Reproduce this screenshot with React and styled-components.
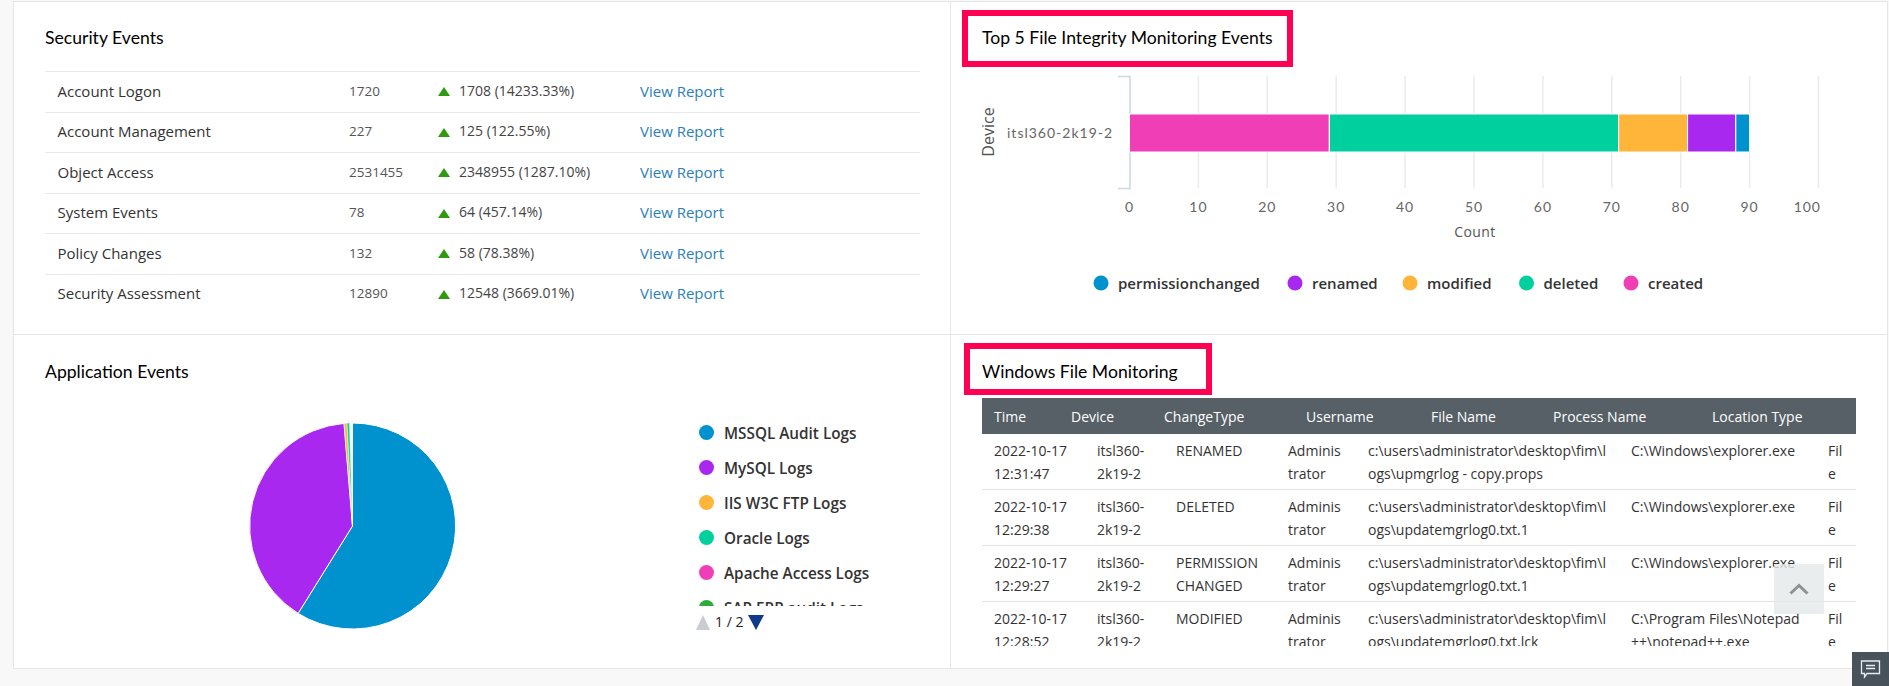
import React from "react";
import styled, { createGlobalStyle } from "styled-components";

const GlobalStyle = createGlobalStyle`
  html, body {
    margin: 0;
    padding: 0;
    background: #f8f8f8;
    overflow: hidden;
  }
  body {
    font-family: "Open Sans", "Liberation Sans", sans-serif;
    color: #333;
  }
`;

const Page = styled.div`
  position: relative;
  width: 1889px;
  height: 686px;
  padding-top: 1px;
  box-sizing: border-box;
  overflow: hidden;
`;

const Board = styled.div`
  margin-left: 13px;
  width: 1875px;
  box-sizing: border-box;
  display: grid;
  grid-template-columns: 937px 936px;
  grid-template-rows: 333px 333px;
  background: #fff;
  border: 1px solid #e6e6e6;
`;

const Panel = styled.section`
  position: relative;
  min-width: 0;
  overflow: hidden;
  box-sizing: border-box;
  padding: ${(p) => (p.$lower ? "26px" : "25px")} ${(p) => (p.$side ? "31px" : "30px")} 0 31px;
  border-right: ${(p) => (p.$side ? "none" : "1px solid #e6e6e6")};
  border-bottom: ${(p) => (p.$lower ? "none" : "1px solid #e6e6e6")};
`;

const Title = styled.h2`
  margin: 0 0 ${(p) => p.$gap || 22}px;
  font-family: Lato, "Open Sans", sans-serif;
  font-size: 17.6px;
  line-height: 22px;
  font-weight: 400;
  color: #000;
`;

const Highlight = styled.div`
  position: absolute;
  left: ${(p) => p.$left}px;
  top: ${(p) => p.$top}px;
  width: ${(p) => p.$width}px;
  height: ${(p) => p.$height}px;
  box-sizing: border-box;
  border: 6px solid #ff0052;
  pointer-events: none;
`;

// security events
const EventRow = styled.div`
  display: grid;
  grid-template-columns: 291.5px 89px 202px 1fr;
  align-items: center;
  height: 40.5px;
  box-sizing: border-box;
  padding-left: 12.5px;
  border-top: 1px solid #e9e9e9;
  font-size: 14px;
`;

const EventName = styled.span`
  font-size: 15px;
  color: #333;
  margin-top: -2px;
`;

const EventCount = styled.span`
  font-size: 13.5px;
  color: #555;
  margin-top: -2px;
`;

const EventDelta = styled.span`
  display: flex;
  align-items: center;
  gap: 9px;
  color: #444;
  margin-top: -3px;
`;

const UpArrow = styled.i`
  width: 0;
  height: 0;
  border-left: 6.5px solid transparent;
  border-right: 6.5px solid transparent;
  border-bottom: 9px solid #2f9a0f;
  margin-top: 3px;
`;

const ReportLink = styled.a`
  font-size: 15px;
  color: #2a80b9;
  text-decoration: none;
  margin-top: -2px;
`;

// bar chart
const ChartSvg = styled.svg`
  display: block;
  margin-left: -31px;
`;

const Tick = styled.text`
  font-family: Lato, "Open Sans", sans-serif;
  font-size: 14px;
  letter-spacing: 1px;
  fill: #666;
`;

const AxisName = styled.text`
  font-family: "Open Sans", sans-serif;
  font-size: ${(p) => p.$size || 14}px;
  fill: #555;
`;

const LegendText = styled.text`
  font-family: "Open Sans", sans-serif;
  font-size: 15px;
  font-weight: 600;
  fill: #333;
`;

// application events
const PieRow = styled.div`
  display: flex;
`;

const PieSvg = styled.svg`
  display: block;
  flex: none;
`;

const PieLegend = styled.div`
  padding-top: 10px;
  margin-left: -1px;
`;

const LegendClip = styled.ul`
  list-style: none;
  margin: 0;
  padding: 0;
  height: 191px;
  overflow: hidden;
`;

const LegendItem = styled.li`
  display: flex;
  align-items: center;
  gap: 10px;
  height: 35px;
  font-size: 15.3px;
  font-weight: 600;
  color: #333;
`;

const Dot = styled.i`
  flex: none;
  width: 15px;
  height: 15px;
  border-radius: 50%;
  background: ${(p) => p.$color};
`;

const Pager = styled.div`
  display: flex;
  align-items: center;
  gap: 5px;
  margin-top: 7px;
  margin-left: -3px;
  font-size: 14px;
  line-height: 18px;
  color: #222;
`;

const PagerUp = styled.i`
  width: 0;
  height: 0;
  border-left: 7.5px solid transparent;
  border-right: 7.5px solid transparent;
  border-bottom: 15px solid #c9ccd0;
`;

const PagerDown = styled.i`
  width: 0;
  height: 0;
  border-left: 8px solid transparent;
  border-right: 8px solid transparent;
  border-top: 15px solid #0f3a8c;
`;

// file monitoring table
const HeadRow = styled.div`
  display: grid;
  grid-template-columns: 77px 93px 142px 125px 122px 159px 1fr;
  align-items: center;
  height: 36px;
  padding-left: 12px;
  background: #566066;
  color: #fff;
  font-size: 14px;
`;

const BodyClip = styled.div`
  height: 212px;
  overflow: hidden;
`;

const FileRow = styled.div`
  display: grid;
  grid-template-columns: 103px 79px 112px 80px 263px 197px 1fr;
  height: 56px;
  box-sizing: border-box;
  border-bottom: 1px solid #e2e2e2;
`;

const FileCell = styled.div`
  padding: 5px 12px 0;
  font-size: 14px;
  line-height: 23px;
  color: #333;
  overflow-wrap: anywhere;
  word-break: ${(p) => (p.$hard ? "break-all" : "normal")};
`;

const TopButton = styled.button`
  position: absolute;
  left: 1774px;
  top: 564px;
  width: 50px;
  height: 50px;
  padding: 0;
  border: 0;
  background: rgba(229, 232, 234, 0.8);
  display: flex;
  align-items: center;
  justify-content: center;
`;

const ChatButton = styled.button`
  position: absolute;
  left: 1852px;
  top: 652px;
  width: 37px;
  height: 34px;
  padding: 0;
  border: 0;
  background: #47525b;
  display: flex;
  align-items: center;
  justify-content: center;
`;

const events = [
  { name: "Account Logon", count: "1720", delta: "1708 (14233.33%)" },
  { name: "Account Management", count: "227", delta: "125 (122.55%)" },
  { name: "Object Access", count: "2531455", delta: "2348955 (1287.10%)" },
  { name: "System Events", count: "78", delta: "64 (457.14%)" },
  { name: "Policy Changes", count: "132", delta: "58 (78.38%)" },
  { name: "Security Assessment", count: "12890", delta: "12548 (3669.01%)" },
];

const bars = [
  { from: 0, to: 29, color: "#f03eb6" },
  { from: 29, to: 71, color: "#00cf9e" },
  { from: 71, to: 81, color: "#ffb43a" },
  { from: 81, to: 88, color: "#a928f0" },
  { from: 88, to: 90, color: "#0092ce" },
];

const chartLegend = [
  { label: "permissionchanged", x: 1100, color: "#0092ce" },
  { label: "renamed", x: 1294, color: "#a928f0" },
  { label: "modified", x: 1409, color: "#ffb43a" },
  { label: "deleted", x: 1525.5, color: "#00cf9e" },
  { label: "created", x: 1630, color: "#f03eb6" },
];

const pieLegend = [
  { label: "MSSQL Audit Logs", color: "#0092ce" },
  { label: "MySQL Logs", color: "#a928f0" },
  { label: "IIS W3C FTP Logs", color: "#ffb43a" },
  { label: "Oracle Logs", color: "#00cf9e" },
  { label: "Apache Access Logs", color: "#f03eb6" },
  { label: "SAP ERP audit Logs", color: "#2eab3f" },
];

const heads = ["Time", "Device", "ChangeType", "Username", "File Name", "Process Name", "Location Type"];

const files = [
  ["2022-10-17 12:31:47", "RENAMED", "c:\\users\\administrator\\desktop\\fim\\logs\\upmgrlog - copy.props", "C:\\Windows\\explorer.exe"],
  ["2022-10-17 12:29:38", "DELETED", "c:\\users\\administrator\\desktop\\fim\\logs\\updatemgrlog0.txt.1", "C:\\Windows\\explorer.exe"],
  ["2022-10-17 12:29:27", "PERMISSION CHANGED", "c:\\users\\administrator\\desktop\\fim\\logs\\updatemgrlog0.txt.1", "C:\\Windows\\explorer.exe"],
  ["2022-10-17 12:28:52", "MODIFIED", "c:\\users\\administrator\\desktop\\fim\\logs\\updatemgrlog0.txt.lck", "C:\\Program Files\\Notepad++\\notepad++.exe"],
];

const tickX = (v) => 1128.5 + v * 6.89;

const BarChart = () => (
  <ChartSvg width="937" height="263" viewBox="950 71 937 263">
    {[10, 20, 30, 40, 50, 60, 70, 80, 90, 100].map((v) => (
      <line key={v} x1={tickX(v)} x2={tickX(v)} y1="76" y2="188" stroke="#ebebeb" strokeWidth="1.5" />
    ))}
    <path d="M1117 76.5H1129V188.5H1117" fill="none" stroke="#ccd6eb" strokeWidth="1.5" />
    {bars.map((b) => (
      <rect
        key={b.color}
        x={tickX(b.from)}
        y="114"
        width={(b.to - b.from) * 6.89}
        height="38"
        fill={b.color}
        stroke="#fff"
        strokeWidth="1"
      />
    ))}
    <AxisName $size={16} transform="translate(993 132) rotate(-90)" textAnchor="middle">Device</AxisName>
    <Tick x="1006" y="138">itsl360-2k19-2</Tick>
    {[0, 10, 20, 30, 40, 50, 60, 70, 80, 90].map((v) => (
      <Tick key={v} x={tickX(v)} y="212" textAnchor="middle">{v}</Tick>
    ))}
    <Tick x="1820" y="212" textAnchor="end">100</Tick>
    <AxisName x="1474" y="237" textAnchor="middle" letterSpacing="0.4">Count</AxisName>
    {chartLegend.map((l) => (
      <g key={l.label}>
        <circle cx={l.x} cy="283" r="7.5" fill={l.color} />
        <LegendText x={l.x + 17} y="289">{l.label}</LegendText>
      </g>
    ))}
  </ChartSvg>
);

const Pie = () => (
  <PieSvg width="655" height="260" viewBox="45 405 655 260">
    <g stroke="#fff" strokeWidth="1">
      <path d="M352.5 526V423A103 103 0 1 1 298.1 613.4Z" fill="#0092ce" />
      <path d="M352.5 526L298.1 613.4A103 103 0 0 1 344 423.4Z" fill="#a928f0" />
      <path d="M352.5 526L344 423.4A103 103 0 0 1 347 423.1Z" fill="#ffb43a" strokeWidth="0.5" />
      <path d="M352.5 526L347 423.1A103 103 0 0 1 349.5 423Z" fill="#00cf9e" strokeWidth="0.5" />
    </g>
  </PieSvg>
);

export default function App() {
  return (
    <>
      <GlobalStyle />
      <Page>
        <Board>
          <Panel>
            <Title>Security Events</Title>
            {events.map((e) => (
              <EventRow key={e.name}>
                <EventName>{e.name}</EventName>
                <EventCount>{e.count}</EventCount>
                <EventDelta>
                  <UpArrow />
                  {e.delta}
                </EventDelta>
                <ReportLink href="#">View Report</ReportLink>
              </EventRow>
            ))}
          </Panel>
          <Panel $side>
            <Title>Top 5 File Integrity Monitoring Events</Title>
            <BarChart />
          </Panel>
          <Panel $lower>
            <Title>Application Events</Title>
            <PieRow>
              <Pie />
              <PieLegend>
                <LegendClip>
                  {pieLegend.map((l) => (
                    <LegendItem key={l.label}>
                      <Dot $color={l.color} />
                      {l.label}
                    </LegendItem>
                  ))}
                </LegendClip>
                <Pager>
                  <PagerUp />
                  1 / 2
                  <PagerDown />
                </Pager>
              </PieLegend>
            </PieRow>
          </Panel>
          <Panel $lower $side>
            <Title $gap={15}>Windows File Monitoring</Title>
            <HeadRow>
              {heads.map((h) => (
                <span key={h}>{h}</span>
              ))}
            </HeadRow>
            <BodyClip>
              {files.map((f) => (
                <FileRow key={f[0]}>
                  <FileCell>{f[0]}</FileCell>
                  <FileCell>itsl360-2k19-2</FileCell>
                  <FileCell>{f[1]}</FileCell>
                  <FileCell $hard>Administrator</FileCell>
                  <FileCell $hard>{f[2]}</FileCell>
                  <FileCell $hard>{f[3]}</FileCell>
                  <FileCell $hard>File</FileCell>
                </FileRow>
              ))}
            </BodyClip>
          </Panel>
        </Board>
        <Highlight $left={962} $top={10} $width={331} $height={57} />
        <Highlight $left={964} $top={343} $width={248} $height={52} />
        <TopButton aria-label="Back to top">
          <svg width="20" height="12" viewBox="0 0 20 12" fill="none" stroke="#8c9194" strokeWidth="3">
            <path d="M1.5 10.5L10 2.5L18.5 10.5" />
          </svg>
        </TopButton>
        <ChatButton aria-label="Feedback">
          <svg width="21" height="19" viewBox="0 0 21 19" fill="none" stroke="#e8ecef" strokeWidth="1.3">
            <path d="M1.5 1H19.5V13.5H7L4.5 17V13.5H1.5Z" />
            <path d="M6 5.5H15M6 8.5H15" strokeWidth="1.6" />
          </svg>
        </ChatButton>
      </Page>
    </>
  );
}
